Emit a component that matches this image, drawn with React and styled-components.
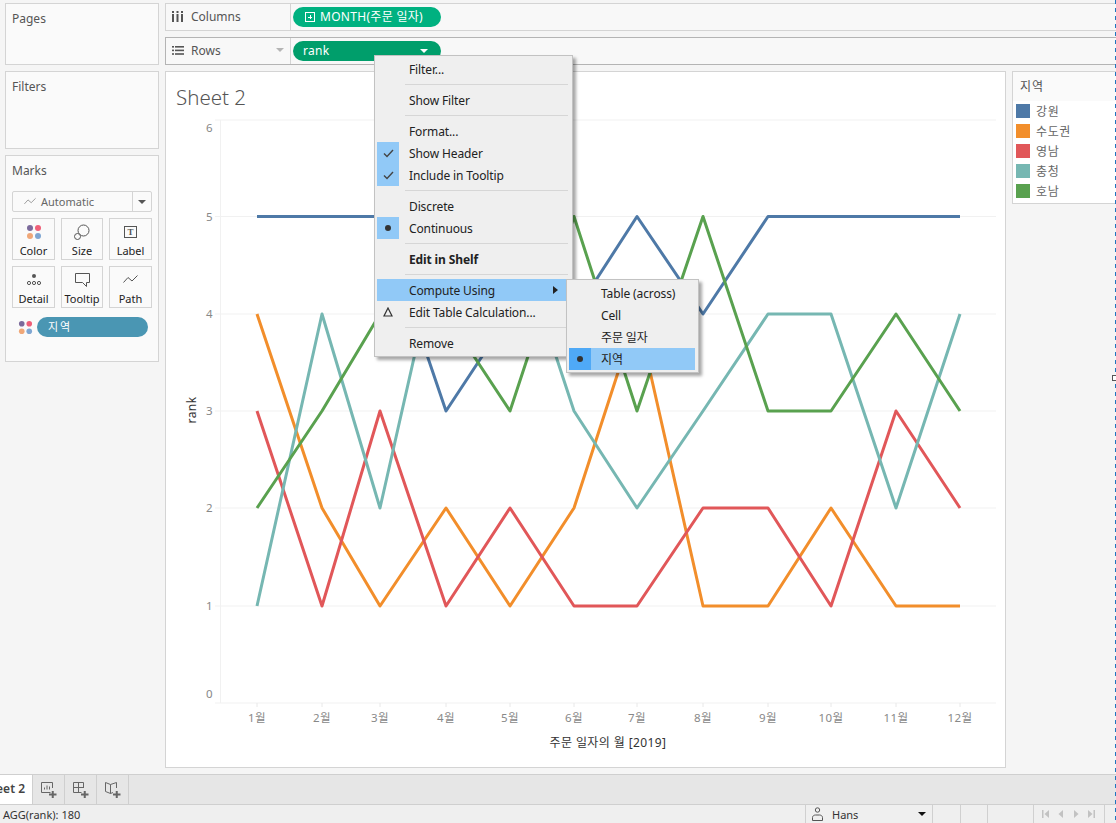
import React from "react"
import styled, { createGlobalStyle } from "styled-components"

const FONT = `"Noto Sans", "Noto Sans CJK KR", sans-serif`

const MONTH_X = [257, 322, 380, 446, 510, 574, 637, 703, 768, 831, 896, 960]
const RANK_Y = [703, 606, 508, 411, 314, 216.5, 120]
// the outermost axis labels sit inside the plot, not on their gridline
const RANK_LABEL_Y = [694, 606, 508, 411, 314, 216.5, 128]

const SERIES = [
  { name: "강원", color: "#4e79a7", ranks: [5, 5, 5, 3, 4, 4, 5, 4, 5, 5, 5, 5] },
  { name: "수도권", color: "#f28e2b", ranks: [4, 2, 1, 2, 1, 2, 4, 1, 1, 2, 1, 1] },
  { name: "영남", color: "#e15759", ranks: [3, 1, 3, 1, 2, 1, 1, 2, 2, 1, 3, 2] },
  { name: "충청", color: "#76b7b2", ranks: [1, 4, 2, 5, 5, 3, 2, 3, 4, 4, 2, 4] },
  { name: "호남", color: "#59a14f", ranks: [2, 3, 4, 4, 3, 5, 3, 5, 3, 3, 4, 3] },
]

const GlobalStyle = createGlobalStyle`
  html, body {
    margin: 0;
    padding: 0;
    background: #f5f5f5;
  }
`

const Dots = ({ size = 16 }) => (
  <svg width={size} height={size} viewBox="0 0 16 16">
    <circle cx="4" cy="4" r="3" fill="#7b6a9b" />
    <circle cx="12" cy="4" r="3" fill="#ef5f78" />
    <circle cx="4" cy="12" r="3" fill="#f0a778" />
    <circle cx="12" cy="12" r="3" fill="#7fa6d2" />
  </svg>
)

const SizeIcon = () => (
  <svg width="16" height="16" viewBox="0 0 16 16" fill="none" stroke="#555">
    <circle cx="9.5" cy="6.5" r="5.5" fill="#fafafa" />
    <circle cx="3.5" cy="12.5" r="3" fill="#fafafa" />
  </svg>
)

const LabelIcon = () => (
  <svg width="14" height="14" viewBox="0 0 14 14">
    <rect x="0.5" y="1.5" width="12" height="11" fill="none" stroke="#555" />
    <text x="6.5" y="10" textAnchor="middle" fontSize="9" fontWeight="700" fontFamily="Liberation Serif, serif" fill="#555">T</text>
  </svg>
)

const DetailIcon = () => (
  <svg width="16" height="14" viewBox="0 0 16 14" fill="none" stroke="#555">
    <circle cx="8" cy="3" r="2" fill="#555" stroke="none" />
    <circle cx="3" cy="10" r="1.6" />
    <circle cx="8" cy="10" r="1.6" />
    <circle cx="13" cy="10" r="1.6" />
  </svg>
)

const TooltipIcon = () => (
  <svg width="16" height="16" viewBox="0 0 16 16" fill="none" stroke="#555">
    <path d="M1.5 1.5H15.5V10.5H12.5V14.5L8.5 10.5H1.5Z" />
  </svg>
)

const PathIcon = ({ stroke = "#555", width = 15 }) => (
  <svg width={width} height="9" viewBox="0 0 15 9" fill="none" stroke={stroke}>
    <path d="M0.5 7.5L5 2.5L9 6L14.5 0.5" />
  </svg>
)

const Check = () => (
  <svg width="11" height="9" viewBox="0 0 11 9" fill="none" stroke="#444" strokeWidth="1.4">
    <path d="M1 4.5L4 7.5L10 1" />
  </svg>
)

const Delta = () => (
  <svg width="10" height="10" viewBox="0 0 10 10" fill="none" stroke="#333" strokeWidth="1.2">
    <path d="M5 1L9 9H1Z" />
  </svg>
)

const Bullet = styled.span`
  width: 6px;
  height: 6px;
  border-radius: 50%;
  background: #333;
`

const ColumnsIcon = () => (
  <svg width="11" height="11" viewBox="0 0 11 11" fill="#555">
    <rect x="0" y="3" width="2" height="8" />
    <rect x="4.5" y="3" width="2" height="8" />
    <rect x="9" y="3" width="2" height="8" />
    <rect x="0" y="0" width="2" height="2" />
    <rect x="4.5" y="0" width="2" height="2" />
    <rect x="9" y="0" width="2" height="2" />
  </svg>
)

const RowsIcon = () => (
  <svg width="12" height="9" viewBox="0 0 12 9" fill="#555">
    <rect x="0" y="0" width="2" height="1.6" />
    <rect x="3" y="0" width="9" height="1.6" />
    <rect x="0" y="3.6" width="2" height="1.6" />
    <rect x="3" y="3.6" width="9" height="1.6" />
    <rect x="0" y="7.2" width="2" height="1.6" />
    <rect x="3" y="7.2" width="9" height="1.6" />
  </svg>
)

const TabSheetIcon = () => (
  <svg width="16" height="16" viewBox="0 0 16 16" fill="none" stroke="#666">
    <path d="M9.5 10.5H0.5V0.5H11.5V6" />
    <path d="M3.5 7.5V5.5M6 7.5V3.5M8.5 7.5V4.5" />
    <path d="M8 12.5H15.5M11.75 9V16" stroke="#666" strokeWidth="2" />
  </svg>
)

const TabDashIcon = () => (
  <svg width="16" height="16" viewBox="0 0 16 16" fill="none" stroke="#666">
    <path d="M8.5 10.5H0.5V0.5H10.5V6M0.5 5.5H10.5M5.5 0.5V10.5" />
    <path d="M8 12.5H15.5M11.75 9V16" strokeWidth="2" />
  </svg>
)

const TabStoryIcon = () => (
  <svg width="16" height="16" viewBox="0 0 16 16" fill="none" stroke="#666">
    <path d="M8 10.5L5.5 11.5L0.5 9.5V0.5L5.5 2.5L11.5 0.5V6M5.5 2.5V11.5" />
    <path d="M8 12.5H15.5M11.75 9V16" strokeWidth="2" />
  </svg>
)

const UserIcon = () => (
  <svg width="11" height="14" viewBox="0 0 11 14" fill="none" stroke="#555">
    <circle cx="5.5" cy="3" r="2.2" />
    <path d="M0.5 13.5V10.5C0.5 9 2 8 3.5 8H7.5C9 8 10.5 9 10.5 10.5V13.5Z" />
  </svg>
)

const NavIcon = ({ d }) => (
  <svg width="8" height="8" viewBox="0 0 8 8" fill="#c2c2c2">
    <path d={d} />
  </svg>
)

const Chart = () => (
  <ChartSvg viewBox="166 112 838 654" width="838" height="654">
    {RANK_Y.map((y, i) => (
      <g key={y}>
        <line x1="215" x2="996" y1={y} y2={y} stroke="#f1f1f1" />
        <TickLabel x="213" y={RANK_LABEL_Y[i] + 4} textAnchor="end">{i}</TickLabel>
      </g>
    ))}
    <line x1="220.5" x2="220.5" y1="120" y2="703" stroke="#f1f1f1" />
    {MONTH_X.map((x, i) => (
      <g key={x}>
        <line x1={x} x2={x} y1="703" y2="707" stroke="#e8e8e8" />
        <TickLabel x={x} y="722" textAnchor="middle">{i + 1}월</TickLabel>
      </g>
    ))}
    {SERIES.map((s) => (
      <polyline
        key={s.name}
        fill="none"
        stroke={s.color}
        strokeWidth="3"
        strokeLinejoin="round"
        points={s.ranks.map((r, i) => `${MONTH_X[i]},${RANK_Y[r]}`).join(" ")}
      />
    ))}
    <AxisTitle x="608" y="747" textAnchor="middle">주문 일자의 월 [2019]</AxisTitle>
    <AxisTitle x="0" y="0" textAnchor="middle" transform="translate(196 410) rotate(-90)">rank</AxisTitle>
  </ChartSvg>
)

const MarkButton = ({ icon, label }) => (
  <MarkCell>
    <MarkIcon>{icon}</MarkIcon>
    <span>{label}</span>
  </MarkCell>
)

const MenuRow = ({ gutter, plain, children, ...rest }) => (
  <Row {...rest}>
    <Gutter $on={!!gutter && !plain}>{gutter}</Gutter>
    <RowText>{children}</RowText>
  </Row>
)

const App = () => {
  return (
    <Page>
      <GlobalStyle />
      <Main>
        <LeftColumn>
          <Card $height={62}><CardTitle>Pages</CardTitle></Card>
          <Card $height={78}><CardTitle>Filters</CardTitle></Card>
          <Card $height={207}>
            <CardTitle>Marks</CardTitle>
            <MarkType>
              <MarkTypeLabel>
                <PathIcon stroke="#888" width={12} />
                <span>Automatic</span>
              </MarkTypeLabel>
              <MarkTypeArrow><Caret $color="#555" /></MarkTypeArrow>
            </MarkType>
            <MarkGrid>
              <MarkButton icon={<Dots />} label="Color" />
              <MarkButton icon={<SizeIcon />} label="Size" />
              <MarkButton icon={<LabelIcon />} label="Label" />
              <MarkButton icon={<DetailIcon />} label="Detail" />
              <MarkButton icon={<TooltipIcon />} label="Tooltip" />
              <MarkButton icon={<PathIcon />} label="Path" />
            </MarkGrid>
            <FieldRow>
              <Dots size={15} />
              <FieldPill>지역</FieldPill>
            </FieldRow>
          </Card>
        </LeftColumn>

        <RightColumn>
          <Shelf>
            <ShelfLabel>
              <ShelfIcon><ColumnsIcon /></ShelfIcon>
              Columns
            </ShelfLabel>
            <Pill $color="#00b180">
              <PlusBox />
              <PillText>MONTH(주문 일자)</PillText>
            </Pill>
          </Shelf>
          <Shelf $active>
            <ShelfLabel>
              <ShelfIcon><RowsIcon /></ShelfIcon>
              Rows
              <ShelfCaret><Caret $color="#b5b5b5" /></ShelfCaret>
            </ShelfLabel>
            <Pill $color="#009e6b" $pad={10}>
              <PillText>rank</PillText>
              <PillCaret><Caret $color="#fff" /></PillCaret>
            </Pill>
          </Shelf>

          <Content>
            <Sheet>
              <SheetTitle>Sheet 2</SheetTitle>
              <Chart />
            </Sheet>
            <Legend>
              <LegendTitle>지역</LegendTitle>
              <LegendBody>
                {SERIES.map((s) => (
                  <LegendRow key={s.name}>
                    <Swatch $color={s.color} />
                    {s.name}
                  </LegendRow>
                ))}
              </LegendBody>
            </Legend>
          </Content>
        </RightColumn>
      </Main>

      <TabBar>
        <Tab>Sheet 2</Tab>
        <TabButton><TabSheetIcon /></TabButton>
        <TabButton><TabDashIcon /></TabButton>
        <TabButton><TabStoryIcon /></TabButton>
      </TabBar>

      <StatusBar>
        <StatusText>AGG(rank): 180</StatusText>
        <UserCell>
          <UserIcon />
          <UserName>Hans</UserName>
          <Caret $color="#111" />
        </UserCell>
        <StatusCell $width={28} />
        <StatusCell $width={27} />
        <StatusCell $width={46} />
        <NavCell>
          <NavIcon d="M0 0H1.5V8H0ZM7 0V8L2.5 4Z" />
          <NavIcon d="M6 0V8L1.5 4Z" />
          <NavIcon d="M2 0V8L6.5 4Z" />
          <NavIcon d="M8 0H6.5V8H8ZM1 0V8L5.5 4Z" />
        </NavCell>
        <StatusCell $width={12} />
      </StatusBar>

      <Menu>
        <MenuRow>Filter...</MenuRow>
        <Separator />
        <MenuRow>Show Filter</MenuRow>
        <Separator />
        <MenuRow>Format...</MenuRow>
        <MenuRow gutter={<Check />}>Show Header</MenuRow>
        <MenuRow gutter={<Check />}>Include in Tooltip</MenuRow>
        <Separator />
        <MenuRow>Discrete</MenuRow>
        <MenuRow gutter={<Bullet />}>Continuous</MenuRow>
        <Separator />
        <MenuRow $bold>Edit in Shelf</MenuRow>
        <Separator />
        <ComputeRow>
          <Gutter />
          <RowText>Compute Using</RowText>
          <SubArrow />
          <Submenu>
            <MenuRow>Table (across)</MenuRow>
            <MenuRow>Cell</MenuRow>
            <MenuRow>주문 일자</MenuRow>
            <SelectedRow>
              <SelectedGutter><Bullet /></SelectedGutter>
              <RowText>지역</RowText>
            </SelectedRow>
          </Submenu>
        </ComputeRow>
        <MenuRow gutter={<Delta />} plain>Edit Table Calculation...</MenuRow>
        <Separator />
        <MenuRow>Remove</MenuRow>
      </Menu>

      <DropEdge />
      <EdgeHandle />
    </Page>
  )
}

const Page = styled.div`
  position: relative;
  width: 1116px;
  height: 823px;
  display: flex;
  flex-direction: column;
  overflow: hidden;
  background: #f5f5f5;
  font-family: ${FONT};
  font-size: 12px;
  color: #333;
`

const Main = styled.div`
  height: 771px;
  padding-top: 3px;
  box-sizing: border-box;
  display: grid;
  grid-template-columns: 154px 1fr;
  column-gap: 6px;
  padding-left: 5px;
`

const LeftColumn = styled.div`
  display: flex;
  flex-direction: column;
  gap: 6px;
`

const Card = styled.div`
  height: ${(p) => p.$height}px;
  box-sizing: border-box;
  border: 1px solid #d4d4d4;
  background: #fafafa;
  padding: 0 6px;
`

const CardTitle = styled.div`
  height: 30px;
  line-height: 29px;
  color: #555;
  font-size: 12px;
`

const MarkType = styled.div`
  margin-top: 5px;
  height: 21px;
  width: 140px;
  box-sizing: border-box;
  border: 1px solid #d4d4d4;
  border-radius: 2px;
  display: flex;
`

const MarkTypeLabel = styled.div`
  flex: 1;
  display: flex;
  align-items: center;
  gap: 5px;
  padding-left: 11px;
  color: #666;
  font-size: 11px;
`

const MarkTypeArrow = styled.div`
  width: 18px;
  border-left: 1px solid #d4d4d4;
  display: flex;
  align-items: center;
  justify-content: center;
`

const Caret = styled.span`
  width: 0;
  height: 0;
  border-left: 4px solid transparent;
  border-right: 4px solid transparent;
  border-top: 4px solid ${(p) => p.$color};
`

const MarkGrid = styled.div`
  margin-top: 6px;
  width: 140px;
  display: grid;
  grid-template-columns: 43px 42px 43px;
  grid-auto-rows: 42px;
  gap: 6px;
`

const MarkCell = styled.div`
  box-sizing: border-box;
  border: 1px solid #d4d4d4;
  display: flex;
  flex-direction: column;
  align-items: center;
  font-size: 11px;
  line-height: 14px;
  color: #222;
`

const MarkIcon = styled.div`
  height: 25px;
  display: flex;
  align-items: center;
  justify-content: center;
`

const FieldRow = styled.div`
  margin-top: 9px;
  padding-left: 6px;
  display: flex;
  align-items: center;
  gap: 4px;
`

const FieldPill = styled.div`
  width: 111px;
  height: 20px;
  border-radius: 10px;
  background: #4a96b3;
  color: #fff;
  font-size: 11px;
  line-height: 20px;
  padding-left: 11px;
  box-sizing: border-box;
  letter-spacing: 2px;
`

const RightColumn = styled.div`
  display: flex;
  flex-direction: column;
  gap: 6px;
  min-width: 0;
`

const Shelf = styled.div`
  height: 28px;
  box-sizing: border-box;
  border: 1px solid ${(p) => (p.$active ? "#b4b4b4" : "#d4d4d4")};
  border-right: 0;
  background: #f8f8f8;
  display: flex;
  align-items: center;
`

const ShelfLabel = styled.div`
  position: relative;
  width: 125px;
  height: 100%;
  box-sizing: border-box;
  border-right: 1px solid #d4d4d4;
  padding-bottom: 2px;
  display: flex;
  align-items: center;
  color: #555;
  padding-left: 6px;
`

const ShelfIcon = styled.span`
  width: 19px;
  display: flex;
`

const ShelfCaret = styled.span`
  margin-left: auto;
  margin-right: 6px;
  display: flex;
`

const Pill = styled.div`
  margin-left: 2px;
  width: 148px;
  height: 20px;
  box-sizing: border-box;
  border-radius: 10px;
  background: ${(p) => p.$color};
  color: #fff;
  display: flex;
  align-items: center;
  gap: 5px;
  padding: 0 12px 0 ${(p) => p.$pad ?? 12}px;
`

const PillText = styled.span`
  letter-spacing: 0.3px;
  line-height: 18px;
  margin-top: -1px;
`

const PlusBox = styled.span`
  width: 8px;
  height: 8px;
  border: 1px solid #fff;
  box-sizing: content-box;
  background:
    linear-gradient(#fff, #fff) center / 4px 1px no-repeat,
    linear-gradient(#fff, #fff) center / 1px 4px no-repeat;
`

const PillCaret = styled.span`
  margin-left: auto;
  margin-right: 1px;
  display: flex;
`

const Content = styled.div`
  display: flex;
  gap: 6px;
  align-items: flex-start;
`

const Sheet = styled.div`
  width: 841px;
  height: 697px;
  box-sizing: border-box;
  border: 1px solid #d4d4d4;
  background: #fff;
`

const SheetTitle = styled.div`
  height: 40px;
  padding-left: 10px;
  font-size: 20.5px;
  font-weight: 300;
  line-height: 50px;
  color: #555;
`

const ChartSvg = styled.svg`
  display: block;
  font-family: ${FONT};
`

const TickLabel = styled.text`
  font-size: 11.5px;
  letter-spacing: 0.4px;
  fill: #888;
`

const AxisTitle = styled.text`
  font-size: 12px;
  letter-spacing: 0.4px;
  fill: #333;
`

const Legend = styled.div`
  flex: 1;
  height: 133px;
  box-sizing: border-box;
  border: 1px solid #d4d4d4;
  border-right: 0;
  display: flex;
  flex-direction: column;
`

const LegendTitle = styled.div`
  height: 29px;
  line-height: 29px;
  padding-left: 7px;
  background: #fafafa;
  color: #555;
  letter-spacing: 1px;
`

const LegendBody = styled.div`
  flex: 1;
  background: #fff;
`

const LegendRow = styled.div`
  height: 20px;
  display: flex;
  align-items: center;
  gap: 6px;
  padding-left: 3px;
  color: #666;
  letter-spacing: 0.6px;
`

const Swatch = styled.span`
  width: 14px;
  height: 14px;
  background: ${(p) => p.$color};
`

const TabBar = styled.div`
  height: 31px;
  box-sizing: border-box;
  margin-top: 3px;
  border-top: 1px solid #cfcfcf;
  border-bottom: 1px solid #cfcfcf;
  background: #e6e6e6;
  display: flex;
`

const Tab = styled.div`
  margin-left: -25px;
  width: 58px;
  box-sizing: border-box;
  text-align: right;
  padding-right: 7px;
  background: #fff;
  border-right: 1px solid #cfcfcf;
  font-weight: 600;
  line-height: 27px;
  color: #444;
`

const TabButton = styled.div`
  width: 32px;
  box-sizing: border-box;
  border-right: 1px solid #cfcfcf;
  display: flex;
  align-items: center;
  justify-content: center;
`

const StatusBar = styled.div`
  flex: 1;
  background: #efefef;
  display: flex;
  font-size: 11px;
  min-height: 0;
`

const StatusText = styled.div`
  flex: 1;
  padding-left: 3px;
  line-height: 20px;
  color: #333;
`

const StatusCell = styled.div`
  width: ${(p) => p.$width}px;
  box-sizing: border-box;
  border-left: 1px solid #d0d0d0;
`

const UserCell = styled.div`
  width: 127px;
  box-sizing: border-box;
  border-left: 1px solid #d0d0d0;
  display: flex;
  align-items: center;
  padding: 0 6px;
`

const UserName = styled.span`
  margin-left: 9px;
  flex: 1;
  color: #333;
`

const NavCell = styled.div`
  width: 71px;
  box-sizing: border-box;
  border-left: 1px solid #d0d0d0;
  display: flex;
  align-items: center;
  gap: 7px;
  padding-left: 8px;
`

const Menu = styled.div`
  position: absolute;
  left: 374px;
  top: 55px;
  width: 199px;
  box-sizing: border-box;
  padding: 2px;
  background: #efefef;
  border: 1px solid #c2c2c2;
  box-shadow: 3px 3px 3px rgba(0, 0, 0, 0.35);
  color: #222;
  letter-spacing: -0.12px;
`

const Row = styled.div`
  height: 22px;
  display: flex;
  align-items: center;
  font-weight: ${(p) => (p.$bold ? 700 : 400)};
`

const Gutter = styled.span`
  width: 22px;
  height: 100%;
  display: flex;
  align-items: center;
  justify-content: center;
  background: ${(p) => (p.$on ? "#91c9f7" : "transparent")};
`

const RowText = styled.span`
  padding-left: 10px;
  white-space: nowrap;
`

const Separator = styled.div`
  height: 9px;
  margin-left: 28px;
  margin-right: 2px;
  background: linear-gradient(#d6d6d6, #d6d6d6) center / 100% 1px no-repeat;
`

const ComputeRow = styled(Row)`
  position: relative;
  background: #91c9f7;
  margin-right: 3px;
`

const SubArrow = styled.span`
  position: absolute;
  left: 176px;
  top: 7px;
  border-top: 4px solid transparent;
  border-bottom: 4px solid transparent;
  border-left: 5px solid #222;
`

const Submenu = styled.div`
  position: absolute;
  left: 189px;
  top: 0;
  width: 133px;
  box-sizing: border-box;
  padding: 2px 3px 2px 2px;
  background: #efefef;
  border: 1px solid #c2c2c2;
  box-shadow: 3px 3px 3px rgba(0, 0, 0, 0.35);
`

const SelectedRow = styled(Row)`
  background: #91c9f7;
`

const SelectedGutter = styled(Gutter)`
  background: #4fa9f6;
`

const DropEdge = styled.div`
  position: absolute;
  right: 0;
  top: 0;
  width: 1px;
  height: 100%;
  background: repeating-linear-gradient(#1f77c0 0 4px, transparent 4px 8px);
`

const EdgeHandle = styled.div`
  position: absolute;
  right: -2px;
  top: 375px;
  width: 4px;
  height: 4px;
  border: 1px solid #555;
  background: #fff;
`

export default App
